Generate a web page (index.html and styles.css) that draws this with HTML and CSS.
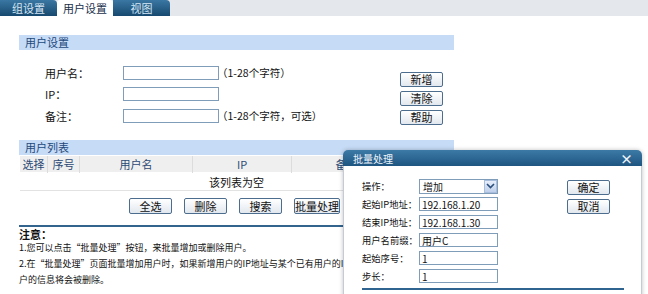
FILE: index.html
```html
<!DOCTYPE html>
<html lang="zh-CN">
<head>
    <meta charset="UTF-8">
    <title>用户设置</title>
    <link rel="stylesheet" href="styles.css">
</head>
<body>

    <div class="abas">
        <span class="aba">组设置</span>
        <span class="aba ativa">用户设置</span>
        <span class="aba">视图</span>
    </div>

    <div class="pagina">
        <div class="titulo-secao">用户设置</div>

        <div class="form-usuario">
            <div class="campos">
                <div class="linha">
                    <label>用户名：</label>
                    <input class="caixa" type="text">
                    <span class="dica">（1-28个字符）</span>
                </div>
                <div class="linha">
                    <label>IP：</label>
                    <input class="caixa" type="text">
                </div>
                <div class="linha">
                    <label>备注：</label>
                    <input class="caixa" type="text">
                    <span class="dica">（1-28个字符，可选）</span>
                </div>
            </div>
            <div class="botoes-lado">
                <button class="botao">新增</button>
                <button class="botao">清除</button>
                <button class="botao">帮助</button>
            </div>
        </div>

        <div class="titulo-secao lista-titulo">用户列表</div>

        <table class="lista">
            <thead>
                <tr>
                    <th class="c-sel">选择</th>
                    <th class="c-num">序号</th>
                    <th class="c-nome">用户名</th>
                    <th class="c-ip">IP</th>
                    <th class="c-obs">备注</th>
                    <th>操作</th>
                </tr>
            </thead>
            <tbody>
                <tr>
                    <td colspan="6" class="vazio">该列表为空</td>
                </tr>
            </tbody>
        </table>

        <div class="botoes-lista">
            <button class="botao">全选</button>
            <button class="botao">删除</button>
            <button class="botao">搜索</button>
            <button class="botao largo">批量处理</button>
        </div>

        <div class="separador"></div>

        <div class="notas">
            <div class="notas-titulo">注意：</div>
            <p>1.您可以点击“批量处理”按钮，来批量增加或删除用户。</p>
            <p>2.在“批量处理”页面批量增加用户时，如果新增用户的IP地址与某个已有用户的IP地址相同，则已有用<br>户的信息将会被删除。</p>
        </div>
    </div>

    <!-- janela sobreposta -->
    <div class="janela">
        <div class="janela-topo">
            <span>批量处理</span>
            <span class="fechar">×</span>
        </div>
        <div class="janela-corpo">
            <div class="janela-form">
                <div class="campos-janela">
                    <div class="linha-j">
                        <label>操作：</label>
                        <div class="selecao">
                            <span>增加</span>
                            <span class="seta">
                                <svg width="9" height="6" viewBox="0 0 9 6"><path d="M1 1 L4.5 4.5 L8 1" fill="none" stroke="#2b4f7c" stroke-width="1.6"/></svg>
                            </span>
                        </div>
                    </div>
                    <div class="linha-j">
                        <label>起始IP地址：</label>
                        <input class="caixa-j" type="text" value="192.168.1.20">
                    </div>
                    <div class="linha-j">
                        <label>结束IP地址：</label>
                        <input class="caixa-j" type="text" value="192.168.1.30">
                    </div>
                    <div class="linha-j">
                        <label>用户名前缀：</label>
                        <input class="caixa-j" type="text" value="用户C">
                    </div>
                    <div class="linha-j">
                        <label>起始序号：</label>
                        <input class="caixa-j" type="text" value="1">
                    </div>
                    <div class="linha-j">
                        <label>步长：</label>
                        <input class="caixa-j" type="text" value="1">
                    </div>
                </div>
                <div class="botoes-janela">
                    <button class="botao">确定</button>
                    <button class="botao">取消</button>
                </div>
            </div>
            <div class="linha-fim"></div>
        </div>
    </div>

</body>
</html>
```

FILE: styles.css
```css
/* --- Base --- */
* {
    margin: 0;
    padding: 0;
    box-sizing: border-box;
}

body {
    font-family: "Noto Sans CJK SC", "DejaVu Sans", sans-serif;
    font-size: 11px;
    color: #111;
    background: #fff;
    width: 648px;
    height: 294px;
    overflow: hidden;
    position: relative;
}

/* --- Abas --- */
.abas {
    display: flex;
    height: 16px;
    background: #e4e8ed;
}

.aba {
    width: 57px;
    height: 16px;
    line-height: 16px;
    text-align: center;
    color: #d6e6f4;
    background: linear-gradient(#3a77a3, #17496f);
    border-radius: 0 4px 0 0;
}

.aba.ativa {
    width: 56px;
    color: #1a2f4c;
    background: #fff;
    border-radius: 3px 3px 0 0;
}

/* --- Pagina --- */
.pagina {
    width: 435px;
    margin-left: 19px;
}

.titulo-secao {
    margin-top: 19px;
    height: 15px;
    line-height: 15px;
    padding-left: 6px;
    background: #c6dbf6;
    color: #23497c;
}

.form-usuario {
    display: flex;
}

.campos {
    width: 381px;
    padding: 12px 0 0 26px;
}

.linha {
    display: flex;
    align-items: center;
    height: 21.5px;
}

.linha label {
    width: 78px;
}

.caixa {
    width: 96px;
    height: 14px;
    border: 1px solid #7f9db9;
    font: inherit;
}

.dica {
    margin-left: -2px;
    font-size: 10.5px;
}

.botoes-lado {
    display: flex;
    flex-direction: column;
    gap: 4px;
    margin-top: 22px;
}

.botao {
    width: 43px;
    height: 15px;
    font-family: inherit;
    font-size: 11px;
    line-height: 13px;
    color: #111;
    background: linear-gradient(#ffffff, #e2e8ef);
    border: 1px solid #4c6d8e;
    border-radius: 2px;
}

.botao.largo {
    width: 46px;
}

.lista-titulo {
    margin-top: 13.5px;
}

/* --- Tabela --- */
.lista {
    width: 435px;
    margin-top: 1px;
    border-collapse: collapse;
    table-layout: fixed;
}

.lista th {
    height: 16px;
    font-weight: normal;
    color: #2b4a74;
    background: #efefef;
    border-left: 1px solid #fff;
    border-right: 1px solid #dcdcdc;
}

.lista .c-sel { width: 28px; }
.lista .c-num { width: 32px; }
.lista .c-nome { width: 113px; }
.lista .c-ip { width: 99px; }
.lista .c-obs { width: 110px; }

.lista td.vazio {
    height: 18px;
    text-align: center;
    border-top: 1px solid #fff;
    border-bottom: 1px solid #e2e2e2;
}

.botoes-lista {
    display: flex;
    justify-content: center;
    gap: 12px;
    margin-top: 7px;
    padding-right: 4px;
}

.botoes-lista .botao {
    height: 16px;
}

.separador {
    margin-top: 11px;
    height: 2px;
    background: #33648e;
}

/* --- Notas --- */
.notas {
    white-space: nowrap;
    font-size: 9px;
}

.notas-titulo {
    margin-top: 1px;
    line-height: 12px;
    font-size: 11px;
    font-weight: bold;
}

.notas p {
    line-height: 16px;
}

/* --- Janela --- */
.janela {
    position: absolute;
    left: 343px;
    top: 150px;
    width: 299px;
    height: 160px;
    box-shadow: 0 0 4px rgba(0, 0, 0, 0.25);
    border-radius: 5px 5px 0 0;
}

.janela-topo {
    display: flex;
    justify-content: space-between;
    align-items: center;
    height: 16px;
    padding: 0 9px 0 10px;
    font-size: 10px;
    color: #eef4fa;
    background: linear-gradient(#3d7aa6, #1e5581);
    border-radius: 5px 5px 0 0;
}

.fechar {
    font-weight: bold;
    font-size: 13px;
}

.janela-corpo {
    height: 144px;
    background: #fff;
    border: 1px solid #c3ccd6;
    border-top: none;
    padding: 11px 0 0 18px;
}

.janela-form {
    display: flex;
}

.campos-janela {
    width: 205px;
}

.linha-j {
    display: flex;
    align-items: center;
    height: 18px;
}

.linha-j label {
    width: 57px;
    font-size: 9.3px;
    white-space: nowrap;
}

.caixa-j {
    width: 79px;
    height: 14px;
    padding-left: 2px;
    border: 1px solid #7f9db9;
    font-family: inherit;
    font-size: 10px;
    color: #111;
}

.selecao {
    display: flex;
    justify-content: space-between;
    align-items: center;
    width: 79px;
    height: 15px;
    padding-left: 3px;
    font-size: 10px;
    border: 1px solid #7f9db9;
}

.seta {
    display: flex;
    align-items: center;
    justify-content: center;
    width: 13px;
    height: 13px;
    background: linear-gradient(#e6eefa, #bfd0ea);
    border: 1px solid #a9bedc;
}

.botoes-janela {
    display: flex;
    flex-direction: column;
    gap: 4px;
    margin-top: 3px;
}

.linha-fim {
    width: 262px;
    height: 2px;
    margin-top: 3px;
    background: #2f6390;
}
```
